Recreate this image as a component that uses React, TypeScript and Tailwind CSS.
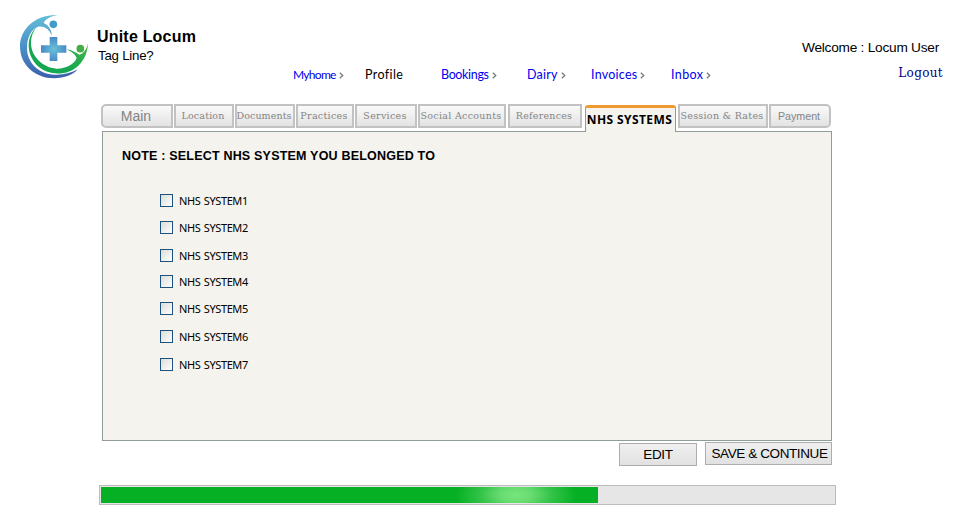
import React from 'react';

const sans = "font-['Liberation_Sans',sans-serif]";
const slab = "font-['DejaVu_Serif',serif]";

function Logo() {
  return (
    <svg className="block h-[67px] w-[72px]" viewBox="54 39 216 201">
      <defs>
        <linearGradient id="ring" x1="0" y1="0" x2="0" y2="1">
          <stop offset="0" stopColor="#63bdd8" />
          <stop offset="0.5" stopColor="#4a90c8" />
          <stop offset="1" stopColor="#3c60ad" />
        </linearGradient>
        <linearGradient id="leaf" x1="0" y1="1" x2="1" y2="0">
          <stop offset="0.4" stopColor="#15a850" />
          <stop offset="1" stopColor="#5cb947" />
        </linearGradient>
        <radialGradient id="cross">
          <stop offset="0" stopColor="#68c2d8" />
          <stop offset="1" stopColor="#4a8ac6" />
        </radialGradient>
      </defs>
      <path fill="url(#ring)" d="M174 45C108 42 60 86 60 139C60 195 105 235 162 235C194 235 220 224 233 208C210 220 190 225 165 224C112 222 81 185 81 143C81 112 94 88 114 80C137 77 149 91 156 108C155 89 146 76 131 69C136 57 151 49 174 45Z" />
      <path fill="url(#leaf)" d="M108 84C79 110 78 161 110 195C145 230 205 227 235 197C255 178 263 155 264 130C259 151 249 162 238 164C228 158 215 150 200 148C215 155 228 165 230 175C222 194 195 207 170 206C125 202 91 165 93 125C94 108 99 97 108 84Z" />
      <circle cx="160" cy="73" r="11.5" fill="#419bc9" />
      <circle cx="241" cy="146" r="11.5" fill="#43ad48" />
      <path fill="url(#cross)" d="M149 111H172V136H199V158H172V183H149V158H123V136H149Z" />
    </svg>
  );
}

const nav = [
  { label: 'Myhome', cls: 'w-[71px]', text: 'text-[12px] tracking-[-0.7px]', arrow: true },
  { label: 'Profile', cls: 'w-[77px]', text: 'pl-px tracking-[0.4px] text-black', arrow: false },
  { label: 'Bookings', cls: 'w-[86px]', text: 'tracking-[-0.35px]', arrow: true },
  { label: 'Dairy', cls: 'w-[64px]', text: 'tracking-[0.2px]', arrow: true },
  { label: 'Invoices', cls: 'w-[80px]', text: 'tracking-[0.25px]', arrow: true },
  { label: 'Inbox', cls: 'w-[60px]', text: 'tracking-[0.4px]', arrow: true },
];

const tabBase =
  'flex h-6 shrink-0 items-center justify-center whitespace-nowrap border-2 border-[#c2c2c2] bg-gradient-to-b from-[#fafafa] to-[#e3e3e3] text-[#858585]';

const before = [
  { label: 'Main', cls: `w-[72px] rounded-l-[5px] pr-0.5 text-[14px] ${sans}` },
  { label: 'Location', cls: `ml-px w-[60px] pr-0.5 text-[9.5px] tracking-[0.15px] ${slab}` },
  { label: 'Documents', cls: `ml-px w-[60px] pr-0.5 text-[9.5px] tracking-[0.1px] ${slab}` },
  { label: 'Practices', cls: `ml-px w-[58px] pr-0.5 text-[9.5px] tracking-[0.3px] ${slab}` },
  { label: 'Services', cls: `ml-px w-[62px] pr-0.5 text-[9.5px] tracking-[0.3px] ${slab}` },
  { label: 'Social Accounts', cls: `ml-px w-[88px] pr-0.5 text-[9.5px] tracking-[0.3px] ${slab}` },
  { label: 'References', cls: `ml-[2px] w-[74px] pr-0.5 text-[9.5px] tracking-[0.25px] ${slab}` },
];

const systems = [
  { label: 'NHS SYSTEM1', gap: '' },
  { label: 'NHS SYSTEM2', gap: 'mt-[14px]' },
  { label: 'NHS SYSTEM3', gap: 'mt-[15px]' },
  { label: 'NHS SYSTEM4', gap: 'mt-[13px]' },
  { label: 'NHS SYSTEM5', gap: 'mt-[14px]' },
  { label: 'NHS SYSTEM6', gap: 'mt-[15px]' },
  { label: 'NHS SYSTEM7', gap: 'mt-[15px]' },
];

export default function App() {
  return (
    <div className={`h-[526px] w-[954px] overflow-hidden bg-white text-black ${sans}`}>
      <header className="flex h-[104px] pl-[18px] pt-[13px]">
        <Logo />
        <div className="ml-[7px] w-[196px] pt-[14px]">
          <h1 className="text-[16px] font-bold leading-5 tracking-[0.2px]">Unite Locum</h1>
          <p className="pl-px text-[13.3px] leading-[18px] tracking-[-0.25px]">Tag Line?</p>
        </div>
        <nav className="mt-[54px] flex h-4 w-[438px] items-center font-['Lato',sans-serif] text-[12.5px] leading-4 text-[#0000ee]">
          {nav.map((n) => (
            <a key={n.label} className={`flex shrink-0 items-center gap-[3px] ${n.cls}`}>
              <span className={n.text}>{n.label}</span>
              {n.arrow && (
                <svg className="h-[7px] w-[5px]" viewBox="0 0 5 7" fill="none" stroke="#777" strokeWidth="1.2">
                  <path d="M.8.7 3.8 3.5 .8 6.3" />
                </svg>
              )}
            </a>
          ))}
        </nav>
        <div className="flex w-[212px] flex-col items-end pt-[26px]">
          <p className="mr-[4px] whitespace-nowrap text-[13.7px] leading-[18px] tracking-[-0.25px]">Welcome : Locum User</p>
          <a className={`mt-[7px] text-[12px] leading-[18px] tracking-[0.35px] text-[#000080] ${slab}`}>Logout</a>
        </div>
      </header>

      <div className="ml-[101px] flex h-[27px] items-start">
        {before.map((t) => (
          <div key={t.label} className={`${tabBase} ${t.cls}`}>{t.label}</div>
        ))}
        <div className="z-10 ml-[3px] mt-px flex h-[27px] w-[91px] shrink-0 items-center justify-center whitespace-nowrap rounded-t-[3px] border-x border-t-[3px] border-x-[#919b9c] border-t-[#ee9a30] bg-[#f4f3ee] pr-0.5 font-['Noto_Sans',sans-serif] text-[12px] font-bold tracking-[0.4px]">
          NHS SYSTEMS
        </div>
        <div className={`${tabBase} ml-[2px] w-[90px] pr-0.5 text-[9.5px] tracking-[0.3px] ${slab}`}>Session &amp; Rates</div>
        <div className={`${tabBase} ml-px w-[62px] rounded-r-[5px] pr-0.5 text-[10.7px]`}>Payment</div>
      </div>

      <main className="ml-[102px] h-[310px] w-[730px] border border-[#919b9c] bg-[#f4f3ee]">
        <h2 className="ml-[19px] mt-[15px] whitespace-nowrap text-[12.5px] font-bold leading-[18px] tracking-[0.2px]">
          NOTE : SELECT NHS SYSTEM YOU BELONGED TO
        </h2>
        <div className="ml-[57px] mt-[29px]">
          {systems.map((s) => (
            <label key={s.label} className={`flex h-[13px] items-center ${s.gap}`}>
              <span className="size-[13px] border border-[#1c5180] bg-gradient-to-br from-[#dcdcd8] to-white" />
              <span className="ml-[6px] whitespace-nowrap font-['Noto_Sans',sans-serif] text-[11px] leading-[13px] tracking-[-0.4px] [word-spacing:1px]">
                {s.label}
              </span>
            </label>
          ))}
        </div>
      </main>

      <div className="ml-[619px] flex h-[44px] items-start pt-px text-[14px]">
        <button className="mt-px h-[23px] w-[78px] border border-[#adadad] bg-gradient-to-b from-[#f0f0f0] to-[#e1e1e1] text-[13.5px] leading-[22px] tracking-[-0.3px]">EDIT</button>
        <button className="ml-2 h-[23px] w-[127px] whitespace-nowrap border border-[#adadad] bg-gradient-to-b from-[#f0f0f0] to-[#e1e1e1] pl-0.5 text-[13.5px] leading-[22px] tracking-[-0.4px]">SAVE &amp; CONTINUE</button>
      </div>

      <div className="ml-[99px] h-[20px] w-[737px] border border-[#bcbcbc] bg-[#e6e6e6] p-px">
        <div className="h-4 w-[497px] bg-[#06b025]">
          <div className="ml-[355px] h-4 w-[120px] bg-[radial-gradient(ellipse_60px_28px_at_center,#76e57d_0%,#67db70_28%,#35c44a_58%,#06b025_100%)]" />
        </div>
      </div>
    </div>
  );
}
